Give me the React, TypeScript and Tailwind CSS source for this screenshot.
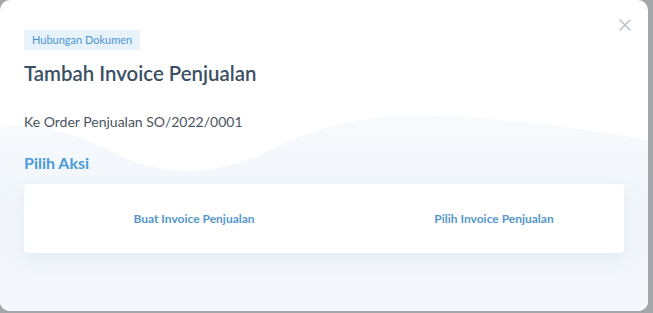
import { X } from "lucide-react";

export default function App() {
  return (
    <div className="w-[653px] h-[313px] bg-[#a3a7aa] overflow-hidden" style={{ fontFamily: "Lato, 'Open Sans', sans-serif" }}>
      <div className="relative w-[648px] h-[311px] bg-white rounded-[10px] overflow-hidden">
        {/* background waves */}
        <svg className="absolute inset-0 pointer-events-none" width="648" height="311" viewBox="0 0 648 311">
          <defs>
            <linearGradient id="wv" x1="0" y1="0" x2="0" y2="1">
              <stop offset="0" stopColor="#f7fafd" />
              <stop offset="0.6" stopColor="#eff5fa" />
              <stop offset="1" stopColor="#f7fafc" />
            </linearGradient>
          </defs>
          <path d="M0 128 C 40 118 90 140 130 160 C 180 180 230 170 270 150 C 330 120 390 112 450 116 C 520 120 590 130 648 140 L648 311 L0 311 Z" fill="url(#wv)" />
          <path d="M0 200 C 120 170 260 200 380 190 C 480 182 560 200 648 190 L648 311 L0 311 Z" fill="#f3f7fb" opacity="0.6" />
        </svg>

        <button className="absolute right-[13px] top-[15px] text-[#b4bcc4]">
          <X size={20} strokeWidth={1.6} />
        </button>

        <div className="relative px-6 pt-[30px]">
          <div className="flex">
            <span className="bg-[#e8f2fb] text-[#4b94d4] text-[11px] leading-[20px] px-[8px] rounded-[2px]">
              Hubungan Dokumen
            </span>
          </div>
          <h2 className="mt-[8px] text-[20.4px] leading-[30px] font-semibold text-[#3a5064]">Tambah Invoice Penjualan</h2>
          <p className="mt-[24px] text-[14px] leading-[20px] text-[#4a5560]">Ke Order Penjualan SO/2022/0001</p>
          <h3 className="mt-[20px] text-[16px] leading-[22px] font-bold text-[#4a9bdb]">Pilih Aksi</h3>
          <div className="mt-[10px] flex h-[69px] bg-white rounded-[4px] shadow-[0_6px_16px_rgba(120,160,200,0.12)]">
            <button className="flex-1 pl-10 text-[12px] font-bold text-[#5597cb]">Buat Invoice Penjualan</button>
            <button className="flex-1 pl-10 text-[12px] font-bold text-[#5597cb]">Pilih Invoice Penjualan</button>
          </div>
        </div>
      </div>
    </div>
  );
}
